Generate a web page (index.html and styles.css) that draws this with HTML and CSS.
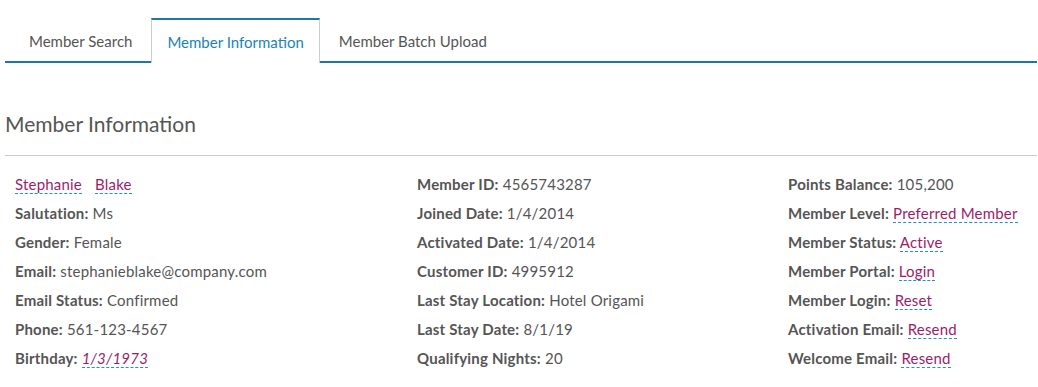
FILE: index.html
```html
<!DOCTYPE html>
<html lang="en">
  <head>
    <meta charset="UTF-8" />
    <title>Member Information</title>
    <link rel="stylesheet" href="styles.css">
  </head>
  <body>
    <div class="tabs">
      <a class="tab">Member Search</a>
      <a class="tab active">Member Information</a>
      <a class="tab">Member Batch Upload</a>
    </div>

    <h2 class="section-title">Member Information</h2>

    <div class="info-grid">
      <div class="info-col">
        <p><a class="edit">Stephanie</a> <a class="edit name-last">Blake</a></p>
        <p><b>Salutation:</b> Ms</p>
        <p><b>Gender:</b> Female</p>
        <p><b>Email:</b> stephanieblake@company.com</p>
        <p><b>Email Status:</b> Confirmed</p>
        <p><b>Phone:</b> 561-123-4567</p>
        <p><b>Birthday:</b> <a class="edit date">1/3/1973</a></p>
      </div>
      <div class="info-col">
        <p><b>Member ID:</b> 4565743287</p>
        <p><b>Joined Date:</b> 1/4/2014</p>
        <p><b>Activated Date:</b> 1/4/2014</p>
        <p><b>Customer ID:</b> 4995912</p>
        <p><b>Last Stay Location:</b> Hotel Origami</p>
        <p><b>Last Stay Date:</b> 8/1/19</p>
        <p><b>Qualifying Nights:</b> 20</p>
      </div>
      <div class="info-col">
        <p><b>Points Balance:</b> 105,200</p>
        <p><b>Member Level:</b> <a class="edit">Preferred Member</a></p>
        <p><b>Member Status:</b> <a class="edit">Active</a></p>
        <p><b>Member Portal:</b> <a class="edit">Login</a></p>
        <p><b>Member Login:</b> <a class="edit">Reset</a></p>
        <p><b>Activation Email:</b> <a class="edit">Resend</a></p>
        <p><b>Welcome Email:</b> <a class="edit">Resend</a></p>
      </div>
    </div>
  </body>
</html>
```

FILE: styles.css
```css
* {
  padding: 0;
  margin: 0;
  box-sizing: border-box;
}

body {
  margin: 18px 1px 0 5px;
  font-family: "Lato", "Open Sans", sans-serif;
  color: #555;
  font-size: 15px;
  background: #fff;
}

.tabs {
  display: flex;
  border-bottom: 2px solid #1b77a4;
  height: 45px;
  font-size: 15px;
}

.tab {
  display: flex;
  align-items: center;
  height: 44px;
  padding: 0 18px 0 23px;
  color: #555;
  border: 1px solid transparent;
  border-top: 2px solid transparent;
}

.tab.active {
  color: #1a84b3;
  background: #fff;
  border-color: #ccc;
  border-top-color: #1b77a4;
  border-bottom: none;
  height: 45px;
  margin-bottom: -2px;
  padding: 0 15px;
}

.tab:last-child {
  padding-left: 18px;
}

.section-title {
  font-weight: 400;
  font-size: 21px;
  margin-top: 48px;
  padding-bottom: 19px;
  border-bottom: 1px solid #ccc;
}

.info-grid {
  display: grid;
  grid-template-columns: 402px 371px 1fr;
  padding: 18px 0 0 10px;
}

.info-col p {
  height: 29px;
  line-height: 20px;
  letter-spacing: 0.2px;
}

.info-col b {
  font-weight: 700;
}

.edit {
  color: #9b1d6a;
  text-decoration: none;
  border-bottom: 1px dashed #1a93d0;
}

.name-last {
  margin-left: 9px;
}

.date {
  font-style: italic;
}
```
